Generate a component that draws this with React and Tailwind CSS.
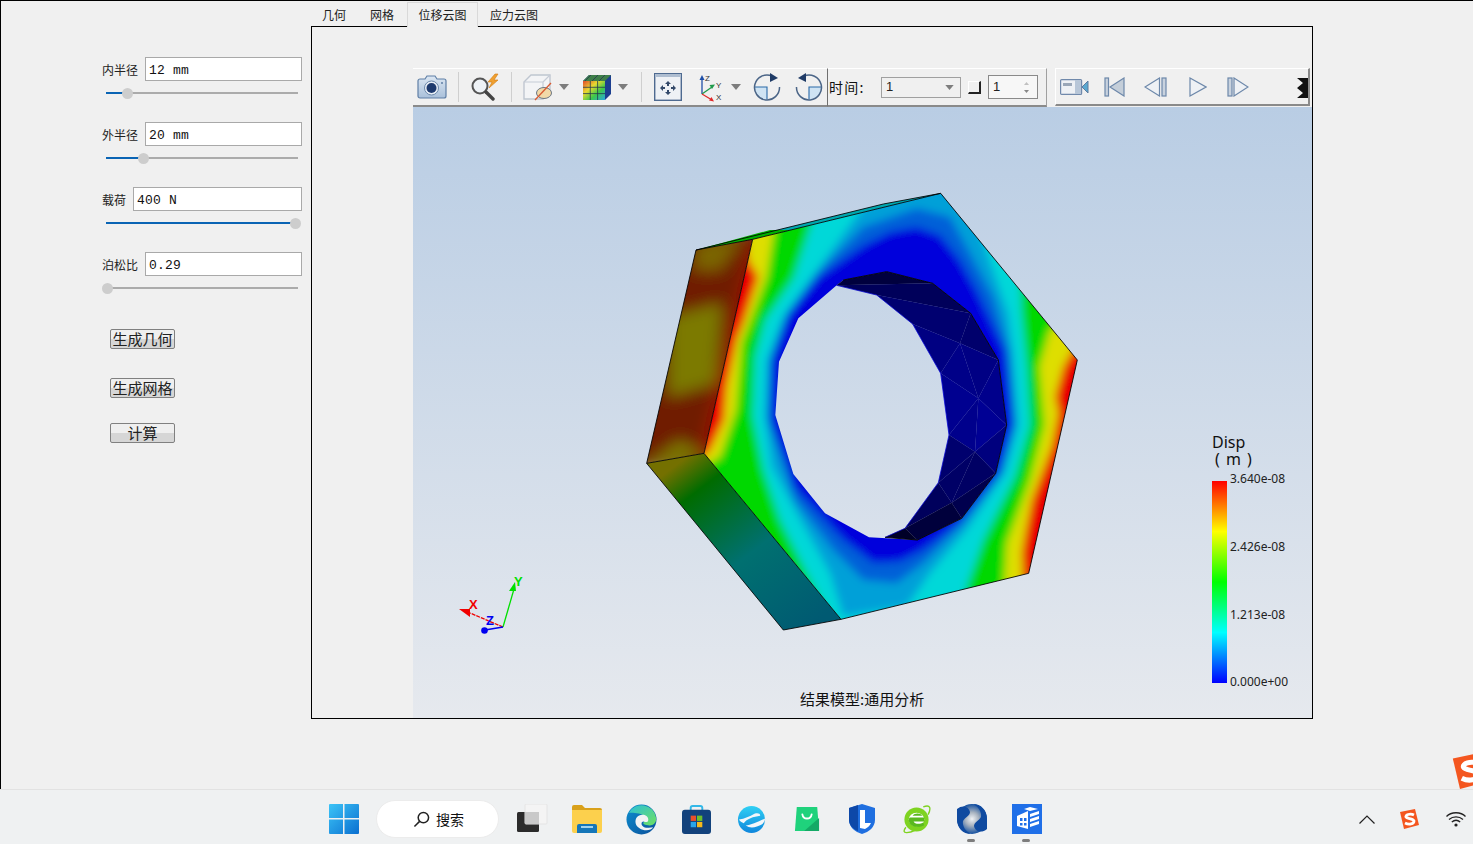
import React from "react";

const CJK = "font-['Noto_Sans_CJK_SC','Noto_Sans',sans-serif]";
const MONO = "font-['Liberation_Mono','Noto_Sans_CJK_SC',monospace]";

function Row({ label, value, fill }) {
  return (
    <div className="h-[65px]">
      <div className="flex items-center h-[24px]">
        <span className={`text-[12px] leading-none text-[#222] ${CJK} mr-[7px] pt-[2px] whitespace-nowrap`}>{label}</span>
        <div className={`flex-1 h-[24px] bg-white border border-[#a9a9a9] pl-[3px] pt-[4px] flex items-center text-[13px] tracking-[0.2px] text-[#111] ${MONO}`}>{value}</div>
      </div>
      <div className="relative ml-[4px] mt-[11px] w-[192px] h-[2px] bg-[#ababab]">
        <div className="h-[2px] bg-[#0a64b4]" style={{ width: fill }} />
        <div className="absolute top-[-4px] w-[11px] h-[11px] rounded-full bg-[#cdcdcd]" style={{ left: fill - 5 }} />
      </div>
    </div>
  );
}

function Btn({ children, cls }) {
  return (
    <div className={`w-[65px] h-[20px] border border-[#808080] rounded-[2px] bg-[linear-gradient(#efefef_0%,#efefef_50%,#d6d6d6_51%,#d6d6d6_100%)] flex items-center justify-center pb-[2px] text-[15px] leading-none text-[#222] ${CJK} ${cls}`}>
      {children}
    </div>
  );
}

const Sep = ({ cls }) => <div className={`w-px h-[30px] bg-[#cfcfcf] ${cls}`} />;
const Caret = ({ cls }) => (
  <svg viewBox="0 0 10 6" className={`w-[10px] h-[6px] ${cls}`}><path d="M0 0H10L5 6Z" fill="#7d7d7d" /></svg>
);

const Camera = () => (
  <svg viewBox="0 0 30 26" className="w-[30px] h-[26px] ml-[4px]">
    <defs><linearGradient id="cam" x1="0" y1="0" x2="0" y2="1"><stop offset="0" stopColor="#dbe6f2" /><stop offset="1" stopColor="#a9c0da" /></linearGradient></defs>
    <path d="M8 5l2-3h8l2 3h7a2 2 0 0 1 2 2v15a2 2 0 0 1-2 2H3a2 2 0 0 1-2-2V7a2 2 0 0 1 2-2z" fill="url(#cam)" stroke="#5f7fa6" strokeWidth="1.2" />
    <circle cx="14.5" cy="14" r="7" fill="#e9eff6" stroke="#6d89ab" />
    <circle cx="14.5" cy="14" r="5" fill="#1e3a6e" />
    <circle cx="25" cy="9" r="1" fill="#5f7fa6" />
  </svg>
);
const Magnifier = () => (
  <svg viewBox="0 0 32 28" className="w-[32px] h-[28px] ml-[10px]">
    <circle cx="11" cy="13" r="7.5" fill="#eef2f6" stroke="#555" strokeWidth="2" />
    <path d="M17 19l7 7" stroke="#444" strokeWidth="3.4" strokeLinecap="round" />
    <path d="M26 1l-7 8h4l-3 6 9-8h-4l4-6z" fill="#f0a030" stroke="#d07a10" strokeWidth=".6" />
  </svg>
);
const CubeHide = () => (
  <svg viewBox="0 0 30 28" className="w-[30px] h-[28px] ml-[11px]">
    <path d="M1 9l7-7h19v17l-7 7H1z" fill="#f3f4f6" stroke="#bfc6d0" strokeWidth="1.4" />
    <path d="M1 9h19v17M20 9l7-7" fill="none" stroke="#c6ccd6" strokeWidth="1.2" />
    <ellipse cx="21" cy="20" rx="7.5" ry="5.5" fill="#f1d9a8" stroke="#6b7683" strokeWidth="1" />
    <path d="M28 10L12 27" stroke="#d85a32" strokeWidth="1.3" />
  </svg>
);
const CubeColor = () => (
  <svg viewBox="0 0 30 28" className="w-[30px] h-[28px] ml-[13px]">
    <defs><linearGradient id="cc" x1="0" y1="0" x2="1" y2="1"><stop offset="0" stopColor="#e0472a" /><stop offset=".35" stopColor="#e8d930" /><stop offset=".65" stopColor="#3cc84a" /><stop offset="1" stopColor="#2aa8e0" /></linearGradient></defs>
    <path d="M1 8l6-6h22v19l-6 6H1z" fill="#1c3f8f" />
    <path d="M1 8l6-6h22l-6 6z" fill="#3f7f4a" />
    <rect x="1" y="8" width="22" height="19" fill="url(#cc)" />
    <path d="M8.3 8v19M15.6 8v19M1 14.3h22M1 20.6h22M9 2L3 8M16 2l-6 6M23 2l-6 6" stroke="#24384f" strokeWidth=".8" fill="none" />
  </svg>
);
const Fit = () => (
  <svg viewBox="0 0 28 28" className="w-[28px] h-[28px] ml-[12px]">
    <rect x=".7" y=".7" width="26.6" height="26.6" fill="#eef1f5" stroke="#4e6a90" strokeWidth="1.4" />
    <rect x="1" y="1" width="26" height="3" fill="#aebdd0" />
    <path d="M14 8l-3 3h2v2h2v-2h2zM14 22l-3-3h2v-2h2v2h2zM6 15l3-3v2h2v2H9v2zM22 15l-3-3v2h-2v2h2v2z" fill="#33496a" />
  </svg>
);
const Axis = () => (
  <svg viewBox="0 0 28 30" className="w-[28px] h-[30px] ml-[14px]">
    <path d="M6 22V7" stroke="#1f4fa8" strokeWidth="1.3" /><path d="M6 3L3.5 8h5z" fill="#1f4fa8" />
    <path d="M6 22l10-7" stroke="#1f9a4a" strokeWidth="1.3" /><path d="M19 12.500l-5.500 0.500 2.500 4z" fill="#1f9a4a" />
    <path d="M6 22l10 6" stroke="#e02a2a" strokeWidth="1.3" /><path d="M18 29.500l-2.500-4.500-2.500 3.500z" fill="#e02a2a" />
    <text x="9" y="9" fontSize="8" fill="#333" fontFamily="Liberation Sans">Z</text>
    <text x="20" y="16" fontSize="8" fill="#333" fontFamily="Liberation Sans">Y</text>
    <text x="20" y="28" fontSize="8" fill="#333" fontFamily="Liberation Sans">X</text>
  </svg>
);
const Rot = ({ flip, cls }) => (
  <svg viewBox="0 0 28 28" className={`w-[28px] h-[28px] ${cls}`} style={flip ? { transform: "scaleX(-1)" } : undefined}>
    <path d="M14 14H1.500A12.500 12.500 0 0 0 14 26.500z" fill="#cfe3f3" />
    <path d="M1.500 14H14v12.500" fill="none" stroke="#2a6aa8" strokeWidth="1.1" />
    <path d="M19 3A12.500 12.500 0 1 0 26.500 14" fill="none" stroke="#4b6587" strokeWidth="1.5" />
    <path d="M25 5l-8 4V0z" fill="#1f3b66" />
  </svg>
);
const Video = () => (
  <svg viewBox="0 0 29 16" className="w-[29px] h-[16px] ml-[4px]">
    <rect x=".6" y=".6" width="21" height="14.800" rx="1" fill="#eef1f5" stroke="#7089ab" strokeWidth="1.2" />
    <rect x="3" y="4" width="9" height="3" fill="#9aa7b8" />
    <rect x="15" y="1" width="6" height="14" fill="#b7c6d8" />
    <path d="M22 8l6-6v12z" fill="#5aa8d0" stroke="#5d7a9e" />
  </svg>
);
const TriIcon = ({ d, w, h, cls, bar, fill = "#eef1f5" }) => (
  <svg viewBox={`0 0 ${w} ${h}`} style={{ width: w, height: h }} className={cls}>
    {bar && <rect {...bar} fill="#c8d2de" stroke="#6d88aa" strokeWidth="1.200" />}
    <path d={d} fill={fill} stroke="#6d88aa" strokeWidth="1.200" />
  </svg>
);

const hex = "M368 178L932 40L1342 540L1196 1180L633 1318L222 820Z";
const hole = "M620 316L505 415L447 545L436 705L490 882L585 1000L717 1072L862 1080L995 1015L1097 880L1130 735L1105 540L1022 400L908 310L770 275L640 300Z";

const tris = [
  ["620,316 640,300 770,275 908,310", "#00003e"],
  ["620,316 908,310 1022,400 740,345", "#00005a"],
  ["740,345 1022,400 990,490 848,432", "#000070"],
  ["848,432 990,490 932,580", "#000082"],
  ["1022,400 1105,540 990,490", "#00006c"],
  ["990,490 1105,540 1045,655", "#000084"],
  ["990,490 1045,655 932,580", "#000088"],
  ["932,580 1045,655 957,765", "#000090"],
  ["1105,540 1130,735 1045,655", "#00008c"],
  ["1045,655 1130,735 1035,815", "#000094"],
  ["1045,655 1035,815 957,765", "#00008c"],
  ["957,765 1035,815 925,908", "#00006e"],
  ["1130,735 1097,880 1035,815", "#00007e"],
  ["1035,815 1097,880 965,968", "#000064"],
  ["925,908 1035,815 965,968", "#000066"],
  ["925,908 965,968 825,1045", "#00005c"],
  ["1097,880 995,1015 965,968", "#00004e"],
  ["965,968 995,1015 862,1080 825,1045", "#00003c"],
  ["825,1045 862,1080 765,1072", "#000028"],
];

function Nut() {
  return (
    <svg viewBox="0 0 1380 1380" className="absolute left-[217px] top-[73px] w-[460px] h-[460px]">
      <defs>
        <filter id="b" filterUnits="userSpaceOnUse" x="-300" y="-300" width="2000" height="2000"><feGaussianBlur stdDeviation="13" /></filter>
        <filter id="b2" filterUnits="userSpaceOnUse" x="-300" y="-300" width="2000" height="2000"><feGaussianBlur stdDeviation="22" /></filter>
        <clipPath id="front"><path d={hex + hole} clipRule="evenodd" /></clipPath>
        <clipPath id="lf"><path d="M198 210L368 178L222 820L50 850Z" /></clipPath>
        <linearGradient id="bf" gradientUnits="userSpaceOnUse" x1="165" y1="835" x2="545" y2="1335">
          <stop offset="0" stopColor="#747000" /><stop offset=".16" stopColor="#006c00" /><stop offset=".55" stopColor="#007070" /><stop offset="1" stopColor="#005a72" />
        </linearGradient>
      </defs>
      <path d="M198 210L760 72L932 40L368 178Z" fill="#00a8b0" />
      <path d="M198 210L368 178L480 150L420 150Z" fill="#00b000" />
      <g clipPath="url(#lf)">
        <g filter="url(#b2)">
          <rect x="0" y="150" width="420" height="720" fill="#701a00" />
          <polygon points="120,410 275,370 255,610 115,650" fill="#7c7a00" />
          <polygon points="200,190 340,170 270,270 190,270" fill="#7c6600" />
          <polygon points="30,870 230,830 150,780" fill="#7c7a00" />
          <polygon points="365,190 385,190 235,830 215,820" fill="#a81000" />
        </g>
      </g>
      <path d="M50 850L222 820L633 1318L460 1350Z" fill="url(#bf)" />
      <g clipPath="url(#front)">
        <g filter="url(#b)">
          <rect x="100" y="0" width="1300" height="1380" fill="#e80000" />
          <polygon points="340,100 1000,-60 1500,400 1345,480 1300,560 1275,650 1285,700 1265,800 1205,960 1185,1060 1175,1120 1180,1250 600,1400 150,900 240,810 282,720 290,620 320,480 340,430 385,290 355,240" fill="#dede00" />
          <polygon points="440,100 1000,-60 1330,400 1260,450 1228,560 1243,735 1200,900 1130,1090 1120,1260 600,1400 150,900 270,830 318,690 335,490 410,290" fill="#00d800" />
          <polygon points="560,80 1000,-50 1170,280 1175,400 1190,560 1200,735 1155,890 1060,1080 1010,1220 1000,1300 620,1350 530,1180 450,1020 400,870 368,710 375,530 405,420 490,295" fill="#00d8d8" />
          <polygon points="700,80 1000,-20 1075,230 1135,400 1150,520 1165,735 1125,880 1010,1050 900,1180 830,1280 640,1310 600,1180 500,1000 425,860 403,710 410,540 460,410 565,265" fill="#00a0d8" />
          <polygon points="700,140 860,85 960,110 1010,200 1090,350 1138,515 1156,733 1115,880 1000,1030 880,1150 800,1210 700,1200 610,1110 495,960 415,720 420,540 470,400 560,280" fill="#0060d8" />
          <polygon points="700,195 780,155 860,140 930,165 990,240 1040,330 1125,510 1148,730 1105,880 985,1030 880,1110 810,1145 730,1150 640,1080 490,920 420,720 425,540 475,400 565,290" fill="#0000dc" />
        </g>
      </g>
      {tris.map(([p, c]) => <polygon key={p} points={p} fill={c} stroke={c} strokeWidth="0.500" />)}
      <path d="M620 316L740 345L848 432L932 580L957 765L925 908L825 1045L765 1072" fill="none" stroke="#0000e0" strokeWidth="2" />
      <g fill="none" stroke="#000" strokeWidth="2.600">
        <path d={hex} />
        <path d="M198 210L368 178M198 210L50 850L222 820M50 850L460 1350L633 1318M198 210L760 72L932 40" />
        <path d="M640 300L770 275L908 310L1022 400L1105 540L1130 735L1097 880L995 1015L862 1080L765 1072" />
      </g>
    </svg>
  );
}

function Triad() {
  return (
    <svg viewBox="0 0 100 75" className="absolute left-[27px] top-[458px] w-[100px] h-[75px]">
      <path d="M63 62L30 48" stroke="#f00000" strokeWidth="1.300" strokeDasharray="4 1" />
      <path d="M19 44h11v8z" fill="#f00000" />
      <path d="M63 62L74 24" stroke="#00e000" strokeWidth="1.300" />
      <path d="M75 17l-6 9h7z" fill="#00e000" />
      <path d="M63 62L45 65" stroke="#0000f0" strokeWidth="1.300" />
      <circle cx="44.500" cy="65.500" r="3.300" fill="#0000f0" />
      <text x="29" y="44" fontSize="13" fontWeight="700" fill="#f00000" fontFamily="Liberation Sans">X</text>
      <text x="74" y="21" fontSize="13" fontWeight="700" fill="#00e000" fontFamily="Liberation Sans">Y</text>
      <text x="46" y="60" fontSize="13" fontWeight="700" fill="#0000f0" fontFamily="Liberation Sans">Z</text>
    </svg>
  );
}

function Legend() {
  const lab = "absolute left-[817px] text-[12px] leading-none text-[#222] font-['Noto_Sans',sans-serif]";
  return (
    <>
      <div className="absolute left-[799px] top-[328px] text-[16px] leading-[15px] text-[#111] font-['Noto_Sans',sans-serif]">Disp</div>
      <div className="absolute left-[802px] top-[345px] text-[16px] leading-[15px] tracking-[1px] text-[#111] whitespace-pre font-['Noto_Sans',sans-serif]">( m )</div>
      <div className="absolute left-[799px] top-[374px] w-[15px] h-[202px] bg-[linear-gradient(#ff0000_0%,#ffff00_25%,#00ff00_50%,#00ffff_75%,#0000ff_100%)]" />
      <div className={`${lab} top-[366px]`}>3.640e-08</div>
      <div className={`${lab} top-[434px]`}>2.426e-08</div>
      <div className={`${lab} top-[502px]`}>1.213e-08</div>
      <div className={`${lab} top-[569px]`}>0.000e+00</div>
    </>
  );
}

const Win = () => (
  <svg viewBox="0 0 30 30" className="w-[30px] h-[30px]">
    <defs><linearGradient id="w" x1="0" y1="0" x2="1" y2="1"><stop offset="0" stopColor="#3cc4f7" /><stop offset="1" stopColor="#0a6fd0" /></linearGradient></defs>
    <path d="M0 1a1 1 0 0 1 1-1h13v14H0zM15.500 0H29a1 1 0 0 1 1 1v13H15.500zM0 15.500h14V30H1a1 1 0 0 1-1-1zM15.500 15.500H30V29a1 1 0 0 1-1 1H15.500z" fill="url(#w)" />
  </svg>
);
const TaskView = () => (
  <svg viewBox="0 0 32 30" className="w-[32px] h-[30px]">
    <rect x="1" y="8" width="22" height="20" rx="1.500" fill="#2b2b2b" />
    <rect x="9" y="0" width="22" height="20" rx="1" fill="#f4f4f4" stroke="#e4e4e4" />
    <rect x="9" y="8" width="14" height="12" fill="#c9c9c9" />
  </svg>
);
const Folder = () => (
  <svg viewBox="0 0 30 28" className="w-[30px] h-[28px]">
    <path d="M0 2a2 2 0 0 1 2-2h8l3 3h15a2 2 0 0 1 2 2v6H0z" fill="#d9a11b" />
    <path d="M0 5h30v21a2 2 0 0 1-2 2H2a2 2 0 0 1-2-2z" fill="#fcd04d" />
    <path d="M5 28v-7a2 2 0 0 1 2-2h16a2 2 0 0 1 2 2v7z" fill="#1576b8" />
    <rect x="9" y="21" width="12" height="2" fill="#9fd2ee" />
  </svg>
);
const Edge = () => (
  <svg viewBox="0 0 32 32" className="w-[31px] h-[31px]">
    <defs>
      <linearGradient id="e1" x1="0" y1="0" x2="1" y2="1"><stop offset="0" stopColor="#0c8fd0" /><stop offset="1" stopColor="#0a4f9a" /></linearGradient>
      <linearGradient id="e2" x1="0" y1="0" x2="1" y2="1"><stop offset="0" stopColor="#2cc0d8" /><stop offset="1" stopColor="#6ee060" /></linearGradient>
    </defs>
    <circle cx="16" cy="16" r="15.500" fill="url(#e1)" />
    <path d="M3 9A15 15 0 0 1 31 14c1 6-4 9-8 8-4 0-6-2-5-3 3-1 3-6-1-8C12 9 6 9 3 9z" fill="url(#e2)" />
    <path d="M17 11c-5 0-8 4-7 9 1 4 6 7 11 7 3 0 6-1 7-3-4 1-12 1-12-4 0-1 1-2 2-2 3 1 5 1 5-2 0-3-3-5-6-5z" fill="#f0f2f4" />
  </svg>
);
const Store = () => (
  <svg viewBox="0 0 30 30" className="w-[29px] h-[29px]">
    <path d="M9 6V3a2 2 0 0 1 2-2h8a2 2 0 0 1 2 2v3" fill="none" stroke="#33b8e8" strokeWidth="2" />
    <rect x="0" y="5" width="30" height="25" rx="3" fill="#12427c" />
    <rect x="9" y="11" width="5.500" height="5.500" fill="#e8502a" /><rect x="15.500" y="11" width="5.500" height="5.500" fill="#6cbf2c" />
    <rect x="9" y="17.500" width="5.500" height="5.500" fill="#2aa4e8" /><rect x="15.500" y="17.500" width="5.500" height="5.500" fill="#f6b81c" />
  </svg>
);
const Ie2 = () => (
  <svg viewBox="0 0 30 30" className="w-[29px] h-[29px]">
    <defs><linearGradient id="i2" x1="0" y1="0" x2="0" y2="1"><stop offset="0" stopColor="#30d0f4" /><stop offset="1" stopColor="#0e86dc" /></linearGradient></defs>
    <circle cx="15" cy="15" r="14" fill="url(#i2)" />
    <path d="M2 15c6-1 11-3 16-6 4-1 6 0 6 2-7 1-14 3-17 8-2-1-4-2-5-4zM9 21c5 0 13-4 20-7 0 2-1 4-3 6-6 3-12 5-17 1z" fill="#f2f6fa" />
  </svg>
);
const Bag = () => (
  <svg viewBox="0 0 26 28" className="w-[26px] h-[26px]">
    <path d="M2 1h22l2 26H0z" fill="#1fd27c" />
    <path d="M26 27H10L26 13z" fill="#14a966" />
    <path d="M8 9c1 6 9 6 10 0" fill="none" stroke="#fff" strokeWidth="2" strokeLinecap="round" />
  </svg>
);
const Shield = () => (
  <svg viewBox="0 0 28 30" className="w-[28px] h-[30px]">
    <path d="M14 0l13 4v12c0 7-6 12-13 14C7 28 1 23 1 16V4z" fill="#1f6fe0" />
    <path d="M1 4l9-3v26C5 25 1 21 1 16z" fill="#0d48a8" />
    <path d="M12 6h5v13h6c-1 3-4 5-6 6l-5-1z" fill="#fff" />
  </svg>
);
const IeG = () => (
  <svg viewBox="0 0 30 32" className="w-[29px] h-[31px]">
    <circle cx="15" cy="16" r="12.500" fill="#7ed321" />
    <ellipse cx="15" cy="16" rx="8" ry="7" fill="#fff" />
    <path d="M8 14h15v4H12c1 3 7 3 10 1l1 3c-6 3-15 2-16-5 0-1 0-2 1-3zM11 12c2-3 8-3 10 0z" fill="#5ab820" />
    <path d="M4 24C-2 32 8 30 14 27M22 3c8-3 8 2 5 8" fill="none" stroke="#7ed321" strokeWidth="1.400" />
  </svg>
);
const Swirl = () => (
  <svg viewBox="0 0 30 30" className="w-[30px] h-[30px]">
    <defs><radialGradient id="s1"><stop offset="0" stopColor="#f0f2f5" /><stop offset=".45" stopColor="#a7b2bf" /><stop offset="1" stopColor="#1450a0" /></radialGradient></defs>
    <rect width="30" height="30" rx="2" fill="#f0f2f4" />
    <circle cx="15" cy="15" r="15" fill="url(#s1)" />
    <path d="M0 5C6 0 12 3 13 8c0 4-5 5-7 9C5 22 9 28 14 30 6 30 0 24 0 15z" fill="#0f4aa0" />
    <path d="M30 25C24 30 18 27 17 22c0-4 5-5 7-9C25 8 21 2 16 0c8 0 14 6 14 15z" fill="#0f4aa0" />
  </svg>
);
const BlueApp = () => (
  <svg viewBox="0 0 30 30" className="w-[30px] h-[30px]">
    <rect width="30" height="30" fill="#1f6fe8" />
    <path d="M5 12l11-5v18l-11-3z" fill="#fff" />
    <path d="M8 14h2.500v3H8zM12 14h2.500v3H12zM8 19h2.500v2.500H8zM12 19h2.500v2.500H12z" fill="#1f6fe8" />
    <path d="M12 5l6-2 8 2-8 2zM18 10l9-3v3l-9 3zM18 15l9-3v3l-9 3zM18 20l9-3v3l-9 3z" fill="#fff" />
  </svg>
);
const Sogou = ({ cls }) => (
  <svg viewBox="0 0 20 20" className={cls}>
    <path d="M1 3l15-3 4 16-15 4z" fill="#f4561f" />
    <path d="M15 6C11 4 6 6 7 8c1 2 7 1 8 4 0 3-5 4-9 2" fill="none" stroke="#fff" strokeWidth="2.800" />
  </svg>
);

const TaskBox = ({ children, on }) => (
  <div className="relative w-[55px] h-[50px] flex items-center justify-center">
    {children}
    {on && <div className="absolute left-[23px] bottom-[2px] w-[8px] h-[3px] rounded-full bg-[#7d7d7d]" />}
  </div>
);

export default function App() {
  return (
    <div className={`relative w-[1473px] h-[844px] overflow-hidden bg-[#f0f0f0] flex flex-col ${CJK}`}>
      <div className="h-[789px] shrink-0 border-t border-l border-black flex">
        <div className="w-[310px] shrink-0 pl-[101px] pt-[56px] pr-[9px]">
          <Row label="内半径" value="12 mm" fill={21} />
          <Row label="外半径" value="20 mm" fill={37} />
          <Row label="载荷" value="400 N" fill={189} />
          <Row label="泊松比" value="0.29" fill={1} />
          <Btn cls="ml-[8px] mt-[12px]">生成几何</Btn>
          <Btn cls="ml-[8px] mt-[29px]">生成网格</Btn>
          <Btn cls="ml-[8px] mt-[25px]">计算</Btn>
        </div>
        <div className="w-[1002px] shrink-0">
          <div className="h-[25px] flex items-end text-[12px] leading-none text-[#222]">
            <div className="h-[24px] pl-[11px] pr-[12px] flex items-center justify-center pt-[2px]">几何</div>
            <div className="h-[24px] pl-[12px] pr-[13px] flex items-center justify-center pt-[2px]">网格</div>
            <div className="h-[25px] w-[71px] -mb-px relative bg-[#f0f0f0] border border-b-0 border-[#d9d9d9] flex items-center justify-center">位移云图</div>
            <div className="h-[24px] px-[12px] flex items-center justify-center pt-[2px]">应力云图</div>
          </div>
          <div className="h-[693px] border border-black pl-[101px] pt-[41px] flex flex-col">
            <div className="h-[39px] shrink-0 flex">
              <div className="w-[415px] flex items-center border-t border-white border-b-2 border-b-[#8a8a8a] border-r border-r-[#6f6f6f]">
                <Camera />
                <Sep cls="ml-[11px]" />
                <Magnifier />
                <Sep cls="ml-[10px]" />
                <CubeHide />
                <Caret cls="ml-[6px]" />
                <CubeColor />
                <Caret cls="ml-[6px]" />
                <Sep cls="ml-[13px]" />
                <Fit />
                <Axis />
                <Caret cls="ml-[7px]" />
                <Rot cls="ml-[12px]" />
                <Rot flip cls="ml-[14px]" />
              </div>
              <div className="w-[219px] flex items-center border-t border-white border-b-2 border-b-[#8a8a8a] border-r border-r-[#a0a0a0]">
                <span className="ml-px w-[38px] text-[14px] leading-none tracking-[1.2px] text-[#111] whitespace-nowrap">时间:</span>
                <div className="ml-[14px] w-[80px] h-[21px] border border-[#a0a0a0] flex items-center justify-between pl-[4px] pr-[6px] text-[13px] text-[#222] font-['Liberation_Sans',sans-serif]">
                  <span>1</span>
                  <Caret cls="!w-[9px] !h-[5px]" />
                </div>
                <div className="ml-[7px] w-[13px] h-[13px] border-r-2 border-b-2 border-[#222] border-t border-l border-t-white border-l-white" />
                <div className="ml-[7px] w-[50px] h-[24px] border border-[#8a8a8a] bg-[#f7f7f7] flex items-center justify-between pl-[4px] pr-[7px] text-[13px] text-[#222] font-['Liberation_Sans',sans-serif]">
                  <span>1</span>
                  <svg viewBox="0 0 7 13" className="w-[7px] h-[13px]"><path d="M3.500 1L6 4H1z" fill="#c0c0c0" /><path d="M3.500 12L6 9H1z" fill="#888" /></svg>
                </div>
              </div>
              <div className="w-[8px]" />
              <div className="w-[255px] h-[38px] flex items-center border-t border-l border-white border-b-2 border-b-[#8a8a8a] border-r-2 border-r-[#8a8a8a] relative">
                <Video />
                <TriIcon w={21} h={20} cls="ml-[15px]" fill="#c4ced9" bar={{ x: 1, y: 1, width: 3.500, height: 18 }} d="M6 10L20 1V19Z" />
                <TriIcon w={23} h={20} cls="ml-[19px]" bar={{ x: 18, y: 1, width: 4, height: 18 }} d="M1 10L15.500 1V19Z" />
                <TriIcon w={18} h={20} cls="ml-[22px]" d="M1 1L17 10L1 19Z" />
                <TriIcon w={22} h={20} cls="ml-[20px]" bar={{ x: 1, y: 1, width: 4, height: 18 }} d="M7 1L21 10L7 19Z" />
                <svg viewBox="0 0 11 20" className="absolute right-0 top-[9px] w-[11px] h-[20px]">
                  <rect width="11" height="20" fill="#111" />
                  <path d="M0 0l6 5-6 5zM0 10l6 5-6 5z" fill="#f0f0f0" />
                </svg>
              </div>
            </div>
            <div className="relative flex-1 bg-[linear-gradient(#b9cde4,#e6e9ee)] overflow-hidden">
              <Nut />
              <Triad />
              <Legend />
              <div className="absolute bottom-[12px] left-[387px] text-[15px] leading-none text-[#111] whitespace-nowrap">结果模型:通用分析</div>
            </div>
          </div>
        </div>
      </div>

      <Sogou cls="absolute left-[1451px] top-[753px] w-[36px] h-[36px]" />

      <div className="h-[55px] shrink-0 bg-[#eff1f2] border-t border-[#e2e2e2] flex items-center pl-[316px] pt-[4px] relative">
        <TaskBox><Win /></TaskBox>
        <div className="ml-[5px] w-[123px] h-[38px] rounded-full bg-white border border-[#ececec] flex items-center pl-[36px] text-[14px] leading-none text-[#111]">
          <svg viewBox="0 0 18 18" className="w-[17px] h-[17px] mr-[6px]" fill="none" stroke="#222" strokeWidth="1.600"><circle cx="11" cy="7" r="5.500" /><path d="M7 11l-5.500 5.500" /></svg>
          搜索
        </div>
        <div className="ml-[5px] flex">
          <TaskBox><TaskView /></TaskBox>
          <TaskBox><Folder /></TaskBox>
          <TaskBox><Edge /></TaskBox>
          <TaskBox><Store /></TaskBox>
          <TaskBox><Ie2 /></TaskBox>
          <TaskBox><Bag /></TaskBox>
          <TaskBox><Shield /></TaskBox>
          <TaskBox><IeG /></TaskBox>
          <TaskBox on><Swirl /></TaskBox>
          <TaskBox on><BlueApp /></TaskBox>
        </div>
        <svg viewBox="0 0 16 9" className="ml-[305px] w-[16px] h-[9px]" fill="none" stroke="#222" strokeWidth="1.200"><path d="M0.500 8.500L8 1l7.500 7.500" /></svg>
        <Sogou cls="ml-[24px] w-[20px] h-[20px]" />
        <svg viewBox="0 0 20 16" className="ml-[27px] w-[20px] h-[16px]" fill="none" stroke="#222" strokeWidth="1.300">
          <path d="M0.500 5.500C5 0.500 15 0.500 19.500 5.500M3 8.500c4-3.500 10-3.500 14 0M5.800 11c2.500-2 6-2 8.400 0" />
          <circle cx="10" cy="14" r="1.600" fill="#222" stroke="none" />
        </svg>
      </div>
    </div>
  );
}
